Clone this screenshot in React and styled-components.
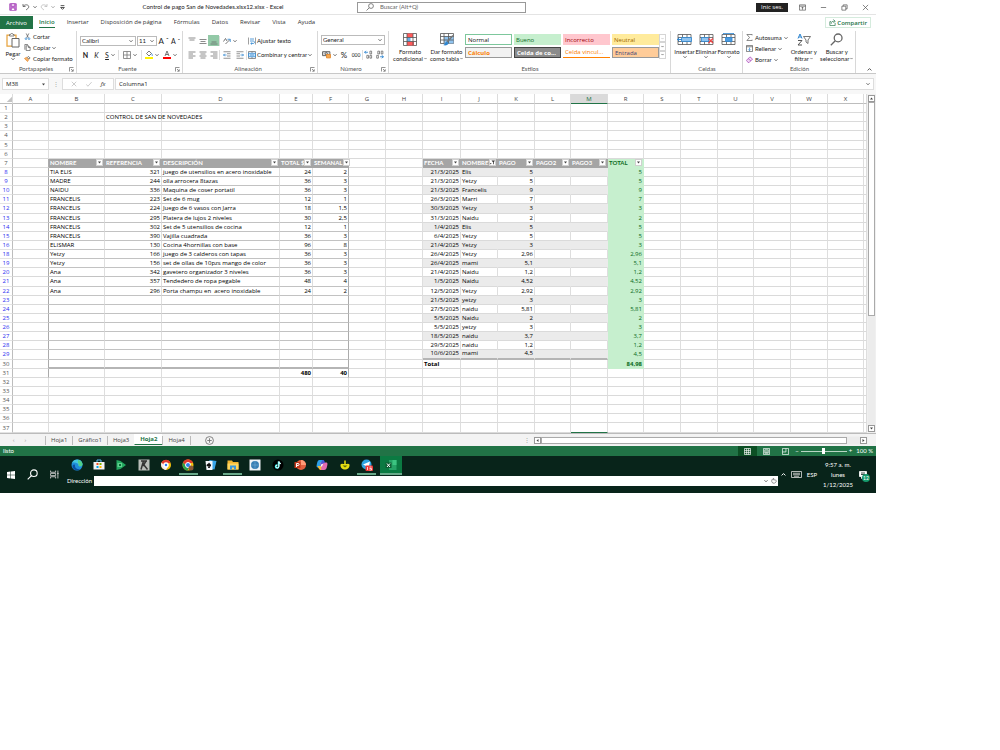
import React from "react";
import styled, { createGlobalStyle, css } from "styled-components";

const GlobalStyle = createGlobalStyle`
  *, *::before, *::after {
    box-sizing: border-box;
  }
  body {
    margin: 0;
    background: #fff;
    font-family: "Open Sans", "Noto Sans", sans-serif;
    font-size: 6px;
    line-height: 8px;
    color: #222;
  }
  button, input, select {
    font: inherit;
    color: inherit;
    margin: 0;
    padding: 0;
    border: 0;
    background: none;
    border-radius: 0;
    outline: 0;
  }
  svg {
    display: block;
    flex: none;
  }
`;

const Page = styled.div`
  padding-right: 124px;
`;

const Row = styled.div`
  display: flex;
  align-items: center;
  gap: ${(p) => p.gap || 0}px;
`;

const Spacer = styled.div`
  flex: 1;
`;

/* ---------- icons ---------- */

const Svg = ({ w = 9, h = w, box = "0 0 16 16", children, ...rest }) => (
  <svg
    width={w}
    height={h}
    viewBox={box}
    fill="none"
    stroke="#555"
    strokeWidth="1.6"
    aria-hidden="true"
    {...rest}
  >
    {children}
  </svg>
);

const Caret = ({ color = "#555", w = 4 }) => (
  <Svg w={w} box="0 0 8 8" stroke={color} strokeWidth="1.8">
    <path d="M1 2.500l3 3 3-3" />
  </Svg>
);

const Arrow = ({ dir, w = 3 }) => (
  <Svg w={w} box="0 0 6 6" stroke="none" fill="#444">
    <path d={{ up: "M0 5h6L3 1z", down: "M0 1h6L3 5z", left: "M5 0v6L1 3z", right: "M1 0v6l4-3z" }[dir]} />
  </Svg>
);

const Launcher = () => (
  <Svg w={5} box="0 0 10 10" stroke="#666" strokeWidth="1.4">
    <path d="M1 9V1h8M4 4l4 4M8.500 4.500v4h-4" />
  </Svg>
);

const SaveIcon = () => (
  <Svg w={8} stroke="#a33fb5">
    <path d="M1.500 1.500h13v13h-13z" fill="#c884d6" />
    <path d="M4.500 1.500h7v5h-7z" fill="#f7e8fa" />
    <path d="M4.500 14v-4h7v4" fill="#fff" />
  </Svg>
);

const UndoIcon = ({ color, flip }) => (
  <Svg w={8} stroke={color} style={flip ? { transform: "scaleX(-1)" } : undefined}>
    <path d="M2 2v5h5M2.500 6.500C6 2 14 3 13.500 8c-.2 2.500-3 4-5.500 6" />
  </Svg>
);

const SearchIcon = ({ w = 8, color = "#666" }) => (
  <Svg w={w} stroke={color}>
    <circle cx="10" cy="6" r="4.800" />
    <path d="M6.500 9.500L1 15" />
  </Svg>
);

const PasteIcon = () => (
  <Svg w={14} h={15} box="0 0 28 30">
    <path d="M2 4h18v22H2z" fill="#fff" stroke="#e8a33d" strokeWidth="2.500" />
    <path d="M7 6V3h2c0-3 5-3 5 0h2v3z" fill="#fff" stroke="#666" />
    <path d="M12 11h14v17H12z" fill="#fff" stroke="#666" strokeWidth="2" />
  </Svg>
);

const CutIcon = () => (
  <Svg w={7}>
    <path d="M5 1l5 10M11 1L6 11" />
    <circle cx="4.500" cy="13" r="2" stroke="#2f86d0" />
    <circle cx="11.500" cy="13" r="2" stroke="#2f86d0" />
  </Svg>
);

const CopyIcon = () => (
  <Svg w={7}>
    <path d="M2 13V1h7M5 4h5l4 4v7H5z" fill="#fff" />
    <path d="M10 4v4h4" />
  </Svg>
);

const BrushIcon = () => (
  <Svg w={7}>
    <path d="M1 8l5-3 5 5-3 5z" fill="#f6b26b" stroke="#e58a2c" />
    <path d="M8 6l2-3 4 4-3 2z" fill="#fff" />
  </Svg>
);

const LinesIcon = ({ lines, w = 8 }) => (
  <Svg w={w} stroke="#666" strokeWidth="1.500">
    {lines.map(([x1, x2, y]) => (
      <path key={y} d={`M${x1} ${y}H${x2}`} />
    ))}
  </Svg>
);

const BorderIcon = () => (
  <Svg w={8} stroke="#777">
    <path d="M1 1h14v14H1zM8 1v14M1 8h14" />
  </Svg>
);

const FillIcon = () => (
  <Svg w={8} h={9} box="0 0 16 18">
    <path d="M3 7l5-5 5 5-5 5z" fill="#fff" />
    <path d="M13 7c2 2 2 4 1 5" stroke="#2f86d0" />
    <path d="M0 16h16" stroke="#fff200" strokeWidth="4" />
  </Svg>
);

const FontColorIcon = () => (
  <Svg w={8} h={9} box="0 0 16 18">
    <path d="M4 12L8 2l4 10M5.500 9h5" />
    <path d="M0 16h16" stroke="#f00" strokeWidth="4" />
  </Svg>
);

const OrientIcon = () => (
  <Svg w={8}>
    <path d="M1 9l4-6 3 5M5 14l9-9" />
    <path d="M9 4.500h5.500V10" stroke="#2f86d0" />
  </Svg>
);

const IndentIcon = ({ flip }) => (
  <Svg w={8} style={flip ? { transform: "scaleX(-1)" } : undefined}>
    <path d="M1 1.500h14M8 5.500h7M8 10h7M1 14.500h14" stroke="#777" />
    <path d="M7 8H1M3.500 5.500L1 8l2.500 2.500" stroke="#2f86d0" />
  </Svg>
);

const WrapIcon = () => (
  <Svg w={8}>
    <path d="M1 1v14M15 1v14" stroke="#888" />
    <path d="M4 4h8M4 8h6c4 0 4 5 0 5H6M8 10.500L5.500 13 8 15" stroke="#2f86d0" />
  </Svg>
);

const MergeIcon = () => (
  <Svg w={8}>
    <path d="M1 1h14v14H1zM8 1v3M8 12v3" stroke="#777" />
    <path d="M1 4.500h14v7H1z" fill="#cfe6f8" stroke="#2f86d0" />
    <path d="M4 8h8" stroke="#2f86d0" />
  </Svg>
);

const MoneyIcon = () => (
  <Svg w={9}>
    <path d="M1 3h13v7H1z" fill="#ddd" />
    <circle cx="7.500" cy="6.500" r="2" />
    <path d="M8 8h7v6H8z" fill="#f7a950" stroke="#e58a2c" />
  </Svg>
);

const DecimalIcon = ({ flip }) => (
  <Svg w={9}>
    <path
      d={flip ? "M9 12h6M12 9.500l3 2.500-3 2.500" : "M7 4H1M3.500 1.500L1 4l2.500 2.500"}
      stroke="#2f86d0"
    />
    <path d={flip ? "M5 2h3v5H5zM11 2h3v5h-3z" : "M10.500 2h3v5h-3z"} strokeWidth="1.200" />
    <path d={flip ? "M3 9.500h3v5H3z" : "M5 9.500h3v5H5zM10.500 9.500h3v5h-3z"} strokeWidth="1.200" />
  </Svg>
);

const ConditionalIcon = () => (
  <Svg w={14} h={13} box="0 0 28 26">
    <path d="M1 1h26v24H1z" fill="#fff" />
    <path d="M8 1h12v8H8zM8 17h14v8H8z" fill="#ff5a5a" stroke="none" />
    <path d="M8 9h7v8H8z" fill="#6aaee8" stroke="none" />
    <path d="M1 9h26M1 17h26M8 1v24M20 1v24" />
  </Svg>
);

const TableFormatIcon = () => (
  <Svg w={14} h={13} box="0 0 28 26">
    <path d="M1 1h26v20H1z" fill="#fff" />
    <path d="M8 7h19v14H8z" fill="#8fc3ef" stroke="none" />
    <path d="M1 7h26M1 14h26M8 1v20M17 1v20" />
    <path d="M26 5L14 18" stroke="#777" strokeWidth="3" />
    <path d="M14 17c-4 0-3 6-8 7 5 2 11 0 11-4z" fill="#2f86d0" stroke="none" />
  </Svg>
);

const CellsIcon = ({ kind }) => (
  <Svg w={15} h={13} box="0 0 30 26">
    <path d="M2 3h26v20H2zM2 9h26M2 17h26M11 3v20M20 3v20" />
    {kind === "insert" && (
      <>
        <path d="M9 9h20v8H9z" fill="#8fc3ef" stroke="#2f86d0" />
        <path d="M10 13H1M5 9l-4 4 4 4" stroke="#2f86d0" strokeWidth="2" />
      </>
    )}
    {kind === "delete" && (
      <>
        <path d="M5 9h14v8H5z" fill="#8fc3ef" stroke="#2f86d0" />
        <path d="M19 11l9 9M28 11l-9 9" stroke="#f04545" strokeWidth="2.400" />
      </>
    )}
    {kind === "format" && (
      <>
        <path d="M9 9h13v8H9z" fill="#4b9be0" stroke="#2f86d0" />
        <path d="M5 1h20M5 0v3M25 0v3" stroke="#2f86d0" />
      </>
    )}
  </Svg>
);

const SigmaIcon = () => (
  <Svg w={7}>
    <path d="M14 3V1H2l6 7-6 7h12v-2" />
  </Svg>
);

const FillDownIcon = () => (
  <Svg w={7}>
    <path d="M1 1h14v14H1zM1 4h14" />
    <path d="M8 6v7M5 10l3 3 3-3" stroke="#2f86d0" />
  </Svg>
);

const EraserIcon = () => (
  <Svg w={7}>
    <path d="M1 10l8-8 6 5-8 8H5z" fill="#f1d8f5" stroke="#a33fb5" />
    <path d="M5 6l6 5" stroke="#a33fb5" />
  </Svg>
);

const SortIcon = () => (
  <Svg w={14} h={13} box="0 0 28 26">
    <path d="M2 11l4-9 4 9M3.500 8h5" stroke="#2f86d0" strokeWidth="2" />
    <path d="M2 15h8l-8 9h8" strokeWidth="2" />
    <path d="M13 7h14l-5 7v7l-4-3v-4z" />
  </Svg>
);

const FilterIcon = () => (
  <Svg w={5} box="0 0 10 10" stroke="none" fill="#333">
    <path d="M3 1h7L7.500 4.500V9L6 8V4.500zM0 6l3 0-1.500 3z" />
  </Svg>
);

/* ---------- title bar ---------- */

const TitleBar = styled.header`
  display: grid;
  grid-template-columns: 357fr 169px 350fr;
  align-items: center;
  height: 15px;
  background: #fff;
  border-bottom: 1px solid #e4e4e4;
`;

const QuickAccess = styled.div`
  display: flex;
  align-items: center;
  padding-left: 7px;
  gap: 3px;
`;

const IconButton = styled.button`
  display: flex;
  align-items: center;
  justify-content: center;
  gap: 3px;
  min-width: ${(p) => p.$w || 0}px;
`;

const DocTitle = styled.h1`
  margin: 0;
  flex: 1;
  text-align: center;
  font-family: Lato, sans-serif;
  font-size: 6px;
  font-weight: 400;
  white-space: nowrap;
`;

const SearchBox = styled.label`
  display: flex;
  align-items: center;
  gap: 6px;
  height: 11px;
  padding-left: 8px;
  border: 1px solid #999;
  font-family: Lato, sans-serif;

  input {
    flex: 1;
    min-width: 0;
  }
  input::placeholder {
    color: #666;
    opacity: 1;
  }
`;

const WindowControls = styled.div`
  display: flex;
  align-items: center;
  justify-content: flex-end;
  gap: 14px;
  padding-right: 7px;
`;

const SignIn = styled.button`
  height: 9px;
  padding: 0 5px;
  margin-right: -3px;
  background: #222;
  color: #fff;
  line-height: 8px;
`;

/* ---------- ribbon ---------- */

const TabBar = styled.nav`
  display: flex;
  align-items: center;
  gap: 12px;
  height: 15px;
  padding-right: 5px;
`;

const FileTab = styled.button`
  height: 13px;
  width: 33px;
  margin-right: -6px;
  background: #217346;
  color: #fff;
`;

const RibbonTab = styled.button`
  height: 11px;
  line-height: 10px;
  color: ${(p) => (p.$active ? "#217346" : "#333")};
  border-bottom: 1px solid ${(p) => (p.$active ? "#217346" : "transparent")};
  font-weight: ${(p) => (p.$active ? 600 : 400)};
`;

const Share = styled.button`
  display: flex;
  align-items: center;
  gap: 1px;
  height: 11px;
  padding: 0 3px;
  border: 1px solid #d5ebdd;
  color: #217346;
  font-weight: 600;
`;

const Ribbon = styled.section`
  display: flex;
  height: 44px;
  padding-top: 1px;
  border-bottom: 1px solid #c8c8c8;
  font-family: Lato, sans-serif;
`;

const GroupBox = styled.div`
  display: flex;
  flex-direction: column;
  flex: 0 0 ${(p) => p.$w}px;
  min-width: 0;
  padding: 0 2px 0 3px;
  border-right: 1px solid #d8d8d8;
`;

const GroupBody = styled.div`
  display: flex;
  gap: ${(p) => p.$gap || 0}px;
  height: 34px;
`;

const GroupLabel = styled.div`
  display: flex;
  align-items: center;
  height: 8px;
  line-height: 8px;
  color: #555;

  span {
    flex: 1;
    text-align: center;
  }
`;

const Group = ({ label, w, gap, launcher, children }) => (
  <GroupBox $w={w}>
    <GroupBody $gap={gap}>{children}</GroupBody>
    <GroupLabel>
      <span>{label}</span>
      {launcher && <Launcher />}
    </GroupLabel>
  </GroupBox>
);

const BigButton = styled.button`
  display: flex;
  flex-direction: column;
  align-items: center;
  flex: none;
  width: ${(p) => p.$w}px;
  padding-top: 2px;
  line-height: 7px;
  white-space: nowrap;

  span {
    display: flex;
    align-items: center;
    gap: 1px;
  }
  span:first-of-type {
    margin-top: 2px;
  }
`;

const Stack = styled.div`
  display: flex;
  flex-direction: column;
  gap: ${(p) => p.$gap || 0}px;
  padding-top: ${(p) => p.$top || 0}px;
`;

const SmallButton = styled.button`
  display: flex;
  align-items: center;
  gap: ${(p) => p.$gap || 2}px;
  height: 11px;
  white-space: nowrap;
`;

const Tool = styled.button`
  display: flex;
  align-items: center;
  justify-content: center;
  gap: 2px;
  width: ${(p) => p.$w || 11}px;
  height: 11px;
  background: ${(p) => (p.$on ? "#93c9a7" : "transparent")};
  font-size: ${(p) => p.$size || 6}px;
  white-space: nowrap;
`;

const Divider = styled.i`
  width: 1px;
  height: 10px;
  background: #ddd;
`;

const Picker = styled.span`
  display: grid;
  align-items: center;
  width: ${(p) => p.$w}px;
  height: 10px;
  border: 1px solid #bbb;

  select, svg {
    grid-area: 1 / 1;
  }
  select {
    appearance: none;
    width: 100%;
    padding-left: 1px;
    line-height: 8px;
  }
  svg {
    justify-self: end;
    margin-right: 2px;
    pointer-events: none;
  }
`;

const SelectBox = ({ label, value, w }) => (
  <Picker $w={w}>
    <select aria-label={label} defaultValue={value}>
      <option>{value}</option>
    </select>
    <Caret />
  </Picker>
);

const Gallery = styled.div`
  display: grid;
  grid-template-columns: repeat(4, 47px);
  grid-template-rows: 11px 11px;
  gap: 2px;
  padding-top: 3px;
  font-family: "Open Sans", sans-serif;
`;

const StyleSwatch = styled.button`
  padding: 0 2px;
  text-align: left;
  line-height: 8px;
  white-space: nowrap;
  ${(p) => p.$look}
`;

const GalleryScroll = styled.div`
  display: flex;
  flex-direction: column;
  width: 7px;
  margin-top: 3px;
  height: 25px;

  button {
    flex: 1;
    display: grid;
    place-items: center;
    border: 1px solid #d5d5d5;
  }
`;

const swatches = [
  ["Normal", css`border: 1px solid #7dc79c; color: #111;`],
  ["Bueno", css`background: #c6efce; color: #0f6b26;`],
  ["Incorrecto", css`background: #ffc7ce; color: #9c0006;`],
  ["Neutral", css`background: #ffeb9c; color: #9c6500;`],
  ["Cálculo", css`background: #f2f2f2; border: 1px solid #999; color: #fa7d00; font-weight: 700;`],
  ["Celda de co...", css`background: #8b8b8b; border: 1px solid #444; color: #fff; font-weight: 700;`],
  ["Celda vincul...", css`color: #fa7d00; border-bottom: 1px solid #ff8001;`],
  ["Entrada", css`background: #ffcc99; border: 1px solid #999; color: #3f3f76;`],
];

const alignRows = {
  top: [[1, 15, 2], [3, 13, 6]],
  middle: [[1, 15, 5], [3, 13, 9], [1, 15, 13]],
  bottom: [[3, 13, 10], [1, 15, 14]],
  left: [[1, 15, 2], [1, 10, 6], [1, 15, 10], [1, 10, 14]],
  center: [[1, 15, 2], [3, 13, 6], [1, 15, 10], [3, 13, 14]],
  right: [[1, 15, 2], [6, 15, 6], [1, 15, 10], [6, 15, 14]],
};

const RibbonPanel = () => (
  <Ribbon>
    <Group label="Portapapeles" w={77} gap={1} launcher>
      <BigButton $w={20}>
        <PasteIcon />
        <span>Pegar</span>
        <Caret />
      </BigButton>
      <Stack>
        <SmallButton><CutIcon />Cortar</SmallButton>
        <SmallButton><CopyIcon />Copiar <Caret /></SmallButton>
        <SmallButton><BrushIcon />Copiar formato</SmallButton>
      </Stack>
    </Group>
    <Group label="Fuente" w={106} launcher>
      <Stack $gap={3} $top={4}>
        <Row gap={1}>
          <SelectBox label="Fuente" value="Calibri" w={56} />
          <SelectBox label="Tamaño" value="11" w={20} />
          <Tool $size={8}>A<sup>ˆ</sup></Tool>
          <Tool $size={7}>A<sup>ˇ</sup></Tool>
        </Row>
        <Row>
          <Tool $size={7}><b>N</b></Tool>
          <Tool $size={7}><i>K</i></Tool>
          <Tool $w={16} $size={7}><u>S</u><Caret /></Tool>
          <Divider />
          <Tool $w={22}><BorderIcon /><Caret /></Tool>
          <Divider />
          <Tool $w={19}><FillIcon /><Caret /></Tool>
          <Tool $w={18}><FontColorIcon /><Caret /></Tool>
        </Row>
      </Stack>
    </Group>
    <Group label="Alineación" w={135} gap={1} launcher>
      <Stack $gap={3} $top={4}>
        <Row>
          <Tool><LinesIcon lines={alignRows.top} /></Tool>
          <Tool><LinesIcon lines={alignRows.middle} /></Tool>
          <Tool $on><LinesIcon lines={alignRows.bottom} /></Tool>
          <Divider />
          <Tool $w={20}><OrientIcon /><Caret /></Tool>
        </Row>
        <Row>
          <Tool><LinesIcon lines={alignRows.left} /></Tool>
          <Tool><LinesIcon lines={alignRows.center} /></Tool>
          <Tool><LinesIcon lines={alignRows.right} /></Tool>
          <Divider />
          <Tool $w={13}><IndentIcon /></Tool>
          <Tool $w={13}><IndentIcon flip /></Tool>
          <Divider />
        </Row>
      </Stack>
      <Stack $gap={3} $top={4}>
        <SmallButton $gap={1}><WrapIcon />Ajustar texto</SmallButton>
        <SmallButton $gap={1}><MergeIcon />Combinar y centrar <Caret /></SmallButton>
      </Stack>
    </Group>
    <Group label="Número" w={71} launcher>
      <Stack $gap={4} $top={4}>
        <SelectBox label="Formato de número" value="General" w={64} />
        <Row>
          <Tool $w={17}><MoneyIcon /><Caret /></Tool>
          <Tool $w={12} $size={8}>%</Tool>
          <Tool $w={12} $size={5}>000</Tool>
          <Divider />
          <Tool><DecimalIcon /></Tool>
          <Tool><DecimalIcon flip /></Tool>
        </Row>
      </Stack>
    </Group>
    <Group label="Estilos" w={282}>
      <BigButton $w={36}>
        <ConditionalIcon />
        <span>Formato</span>
        <span>condicional <Caret w={3} /></span>
      </BigButton>
      <BigButton $w={37}>
        <TableFormatIcon />
        <span>Dar formato</span>
        <span>como tabla <Caret w={3} /></span>
      </BigButton>
      <Gallery>
        {swatches.map(([name, look]) => (
          <StyleSwatch key={name} $look={look}>{name}</StyleSwatch>
        ))}
      </Gallery>
      <GalleryScroll>
        <button aria-label="Subir"><Caret color="#bbb" w={3} /></button>
        <button aria-label="Bajar"><Caret w={3} /></button>
        <button aria-label="Más"><Caret w={3} /></button>
      </GalleryScroll>
    </Group>
    <Group label="Celdas" w={72}>
      <BigButton $w={21}><CellsIcon kind="insert" /><span>Insertar</span><Caret /></BigButton>
      <BigButton $w={22}><CellsIcon kind="delete" /><span>Eliminar</span><Caret /></BigButton>
      <BigButton $w={23}><CellsIcon kind="format" /><span>Formato</span><Caret /></BigButton>
    </Group>
    <Group label="Edición" w={113} gap={1}>
      <Stack $top={1}>
        <SmallButton><SigmaIcon />Autosuma <Caret /></SmallButton>
        <SmallButton><FillDownIcon />Rellenar <Caret /></SmallButton>
        <SmallButton><EraserIcon />Borrar <Caret /></SmallButton>
      </Stack>
      <BigButton $w={30}>
        <SortIcon />
        <span>Ordenar y</span>
        <span>filtrar <Caret w={3} /></span>
      </BigButton>
      <BigButton $w={34}>
        <SearchIcon w={13} />
        <span>Buscar y</span>
        <span>seleccionar <Caret w={3} /></span>
      </BigButton>
    </Group>
    <Spacer />
    <CollapseButton aria-label="Contraer la cinta">
      <Svg w={5} box="0 0 8 8"><path d="M1 5.500l3-3 3 3" /></Svg>
    </CollapseButton>
  </Ribbon>
);

const CollapseButton = styled.button`
  align-self: flex-end;
  padding: 0 4px 1px 0;
`;

/* ---------- formula bar ---------- */

const FormulaBar = styled.div`
  display: flex;
  align-items: center;
  height: 20px;
  padding: 0 1px 0 2px;
  background: #f7f7f7;
`;

const FormulaBox = styled.div`
  display: flex;
  align-items: center;
  justify-content: space-around;
  width: ${(p) => p.$w}px;
  flex: ${(p) => (p.$w ? "none" : 1)};
  height: 12px;
  padding: 0 3px;
  margin-right: 1px;
  background: #fff;
  border: 1px solid #ddd;

  input {
    flex: 1;
    min-width: 0;
  }
`;

const Dots = styled.span`
  width: 12px;
  text-align: center;
  color: #999;
`;

/* ---------- grid ---------- */

const SheetArea = styled.div`
  display: flex;
`;

const Grid = styled.table`
  flex: 1;
  width: 100%;
  height: 339px;
  table-layout: fixed;
  border-collapse: separate;
  border-spacing: 0;
  font-size: 6px;
  line-height: 7px;
  color: #000;
`;

const ColHead = styled.th`
  height: 10px;
  padding: 1px 0 0;
  font-weight: 400;
  color: #444;
  background: ${(p) => (p.$selected ? "#dadada" : "#fff")};
  border-right: 1px solid #dcdcdc;
  border-bottom: 1px solid ${(p) => (p.$selected ? "#217346" : "#bdbdbd")};
  ${(p) => p.$selected && "color: #217346;"}
`;

const RowHead = styled.th`
  padding: 1px 0 0;
  font-weight: 400;
  color: ${(p) => (p.$filtered ? "#2a2af0" : "#555")};
  border-right: 1px solid #bdbdbd;
  border-bottom: 1px solid #e4e4e4;
`;

const Cell = styled.td`
  padding: 1px 1px 0;
  white-space: pre;
  text-align: ${(p) => (p.$right ? "right" : "left")};
  border-right: 1px solid #dedede;
  border-bottom: 1px solid #dadada;
  ${(p) => p.$bold && "font-weight: 700;"}
  ${(p) => p.$framed && "border-bottom-color: #c2c2c2;"}
  ${(p) => p.$edge && "border-right-color: #ababab;"}
  ${(p) => p.$band && "background: #ebebeb; border-right-color: #ebebeb;"}
  ${(p) => p.$green && "background: #c6efce; color: #0b6b22; border-color: #c6efce;"}
  ${(p) => p.$head && "padding-top: 0;"}
  ${(p) => p.$head && !p.$green && "background: #a5a5a5; color: #fff; border-color: #a5a5a5;"}
  ${(p) => p.$double && "padding-top: 0; border-bottom: 2px solid #b5b5b5;"}
  ${(p) => p.$active && "border-bottom: 1px solid #217346;"}
`;

const HeadContent = styled.div`
  display: flex;
  align-items: center;
  justify-content: space-between;
  font-family: Lato, sans-serif;
`;

const FilterButton = styled.button`
  display: grid;
  place-items: center;
  flex: none;
  width: 7px;
  height: 7px;
  background: #fff;
  border: 1px solid #d0d0d0;
`;

const columns = [
  ["A", 36], ["B", 56], ["C", 57], ["D", 118], ["E", 33], ["F", 36], ["G", 37],
  ["H", 37], ["I", 38], ["J", 37], ["K", 37], ["L", 36], ["M", 37], ["R", 36],
  ["S", 37], ["T", 37], ["U", 36], ["V", 37], ["W", 37], ["X", 36],
];

const headings = {
  B: "NOMBRE", C: "REFERENCIA", D: "DESCRIPCIÓN", E: "TOTAL $", F: "SEMANAL",
  I: "FECHA", J: "NOMBRE", K: "PAGO", L: "PAGO2", M: "PAGO3", R: "TOTAL",
};

const products = {
  8: ["TIA ELIS", "321", "juego de utensilios en acero inoxidable", "24", "2"],
  9: ["MADRE", "244", "olla arrocera 8tazas", "36", "3"],
  10: ["NAIDU", "336", "Maquina de coser portatil", "36", "3"],
  11: ["FRANCELIS", "223", "Set de 6 mug", "12", "1"],
  12: ["FRANCELIS", "224", "Juego de 6 vasos con Jarra", "18", "1,5"],
  13: ["FRANCELIS", "295", "Platera de lujos 2 niveles", "30", "2,5"],
  14: ["FRANCELIS", "302", "Set de 5 utensilios de cocina", "12", "1"],
  15: ["FRANCELIS", "390", "Vajilla cuadrada", "36", "3"],
  16: ["ELISMAR", "130", "Cocina 4hornillas con base", "96", "8"],
  18: ["Yetzy", "166", "juego de 3 calderos con tapas", "36", "3"],
  19: ["Yetzy", "156", "set de ollas de 10pzs mango de color", "36", "3"],
  20: ["Ana", "342", "gavetero organizador 3 niveles", "36", "3"],
  21: ["Ana", "357", "Tendedero de ropa pegable", "48", "4"],
  22: ["Ana", "296", "Porta champu en  acero inoxidable", "24", "2"],
  31: ["", "", "", "480", "40"],
};

const payments = {
  8: ["21/3/2025", "Elis", "5"],
  9: ["21/3/2025", "Yetzy", "5"],
  10: ["21/3/2025", "Francelis", "9"],
  11: ["26/3/2025", "Marri", "7"],
  12: ["30/3/2025", "Yetzy", "3"],
  13: ["31/3/2025", "Naidu", "2"],
  14: ["1/4/2025", "Elis", "5"],
  15: ["6/4/2025", "Yetzy", "5"],
  16: ["21/4/2025", "Yetzy", "3"],
  18: ["26/4/2025", "Yetzy", "2,96"],
  19: ["26/4/2025", "mami", "5,1"],
  20: ["21/4/2025", "Naidu", "1,2"],
  21: ["1/5/2025", "Naidu", "4,52"],
  22: ["12/5/2025", "Yetzy", "2,92"],
  23: ["21/5/2025", "yetzy", "3"],
  24: ["27/5/2025", "naidu", "5,81"],
  25: ["5/5/2025", "Naidu", "2"],
  26: ["5/5/2025", "yetzy", "3"],
  27: ["18/5/2025", "naidu", "3,7"],
  28: ["29/5/2025", "naidu", "1,2"],
  29: ["10/6/2025", "mami", "4,5"],
};

const rowNumbers = Array.from({ length: 37 }, (_, i) => i + 1).filter((n) => n !== 17);

const cellText = (col, n) => {
  if (n === 2 && col === "C") return "CONTROL DE SAN DE NOVEDADES";
  if (n === 30 && col === "I") return "Total";
  if (n === 30 && col === "R") return "84,98";
  const product = "BCDEF".indexOf(col);
  if (product >= 0) return products[n]?.[product];
  if (col === "R") return payments[n]?.[2];
  const payment = "IJK".indexOf(col);
  return payment >= 0 ? payments[n]?.[payment] : undefined;
};

const Sheet = () => (
  <Grid>
    <colgroup>
      <col style={{ width: 13 }} />
      {columns.map(([name, w]) => (
        <col key={name} style={{ width: w }} />
      ))}
      <col />
    </colgroup>
    <thead>
      <tr>
        <ColHead aria-label="Seleccionar todo">
          <Svg w={6} box="0 0 8 8" stroke="none" style={{ marginLeft: "auto" }}>
            <path d="M8 1v7H1z" fill="#c4c4c4" />
          </Svg>
        </ColHead>
        {columns.map(([name]) => (
          <ColHead key={name} $selected={name === "M"}>{name}</ColHead>
        ))}
        <ColHead />
      </tr>
    </thead>
    <tbody>
      {rowNumbers.map((n) => (
        <tr key={n}>
          <RowHead $filtered={n > 7 && n < 30}>{n}</RowHead>
          {columns.map(([col]) => {
            const head = n === 7 && headings[col];
            const left = "BCDEF".includes(col);
            const right = "IJKLM".includes(col);
            return (
              <Cell
                key={col}
                $head={!!head}
                $bold={!!head || (n >= 30 && n <= 31)}
                $right={!head && "CEFIKR".includes(col) && n > 7 && !(n === 30 && col === "I")}
                $framed={left && n > 6 && n < 31}
                $edge={(col === "A" || col === "F") && n > 6 && n < 32}
                $band={right && n > 7 && n < 30 && (n < 17 ? n % 2 === 0 : n % 2 === 1)}
                $green={col === "R" && n > 6 && n < 31}
                $double={(left && n === 30) || (right && n === 29)}
                $active={col === "M" && n === 37}
              >
                {head ? (
                  <HeadContent>
                    {head}
                    <FilterButton aria-label={`Filtrar ${head}`}>
                      {col === "J" ? <FilterIcon /> : <Arrow dir="down" />}
                    </FilterButton>
                  </HeadContent>
                ) : (
                  cellText(col, n)
                )}
              </Cell>
            );
          })}
          <Cell />
        </tr>
      ))}
    </tbody>
  </Grid>
);

const ScrollTrack = styled.div`
  display: flex;
  flex-direction: ${(p) => (p.$vertical ? "column" : "row")};
  flex: none;
  width: ${(p) => (p.$vertical ? 9 : 335)}px;
  padding: 1px;
  background: #f0f0f0;
`;

const ScrollButton = styled.button`
  display: grid;
  place-items: center;
  width: 7px;
  height: 7px;
  background: #fff;
  border: 1px solid #999;
`;

const ScrollThumb = styled.div`
  flex: ${(p) => p.$grow};
  background: #fff;
  border: 1px solid #aaa;
`;

const ScrollRest = styled.div`
  flex: ${(p) => p.$grow};
  background: #ececec;
`;

const Corner = styled.div`
  width: 8px;
`;

/* ---------- sheet tabs and status bar ---------- */

const SheetTabs = styled.div`
  display: flex;
  align-items: center;
  height: 13px;
  background: #f3f3f3;
  border-top: 1px solid #bbb;
`;

const TabNav = styled.div`
  display: flex;
  justify-content: center;
  gap: 10px;
  width: 45px;
  padding-right: 6px;
  color: #999;
`;

const SheetTab = styled.button`
  height: 9px;
  padding: 0 5px;
  border-left: 1px solid #bbb;
  line-height: 8px;
  color: #444;
  ${(p) =>
    p.$active &&
    css`
      height: 11px;
      margin-bottom: 1px;
      background: #fff;
      color: #217346;
      font-weight: 700;
      border-left-color: #fff;
      border-bottom: 1px solid #217346;
    `}
`;

const AddSheet = styled.button`
  padding-left: 14px;
  border-left: 1px solid #bbb;
`;

const StatusBar = styled.footer`
  display: flex;
  align-items: center;
  height: 10px;
  padding: 0 3px;
  background: #217346;
  color: #fff;
  font-family: Lato, sans-serif;
`;

const ViewButton = styled.button`
  display: grid;
  place-items: center;
  width: 19px;
  height: 10px;
  background: ${(p) => (p.$on ? "#0c4f24" : "transparent")};
`;

const ZoomSlider = styled.input`
  appearance: none;
  width: 46px;
  height: 8px;
  margin: 0 2px;
  background: linear-gradient(#b9d6c5, #b9d6c5) center / 100% 1px no-repeat;

  &::-webkit-slider-thumb {
    appearance: none;
    width: 3px;
    height: 6px;
    background: #fff;
  }
`;

/* ---------- taskbar ---------- */

const Taskbar = styled.div`
  display: flex;
  height: 37px;
  padding-left: 7px;
  background: #08241a;
  color: #fff;
  font-family: Lato, sans-serif;
`;

const StartButtons = styled.div`
  display: flex;
  align-items: center;
  gap: 12px;
  width: 60px;
`;

const TaskMain = styled.div`
  flex: 1;
  display: flex;
  flex-direction: column;
`;

const Apps = styled.div`
  display: flex;
  justify-content: space-between;
  width: 335px;
  height: 19px;
`;

const AppButton = styled.button`
  display: grid;
  place-items: center;
  width: ${(p) => (p.$tile ? 22 : 19)}px;
  background: ${(p) => (p.$tile ? "#0b7a42" : "transparent")};
  border-bottom: 2px solid ${(p) => (p.$open ? "#6aa98a" : "transparent")};
`;

const AddressRow = styled.label`
  display: flex;
  align-items: center;
  gap: 2px;
  height: 12px;
`;

const AddressBox = styled.span`
  flex: 1;
  display: flex;
  align-items: center;
  gap: 3px;
  height: 10px;
  padding-right: 1px;
  background: #fff;

  input {
    flex: 1;
    color: #222;
  }
`;

const Tray = styled.div`
  display: flex;
  align-items: center;
  gap: 5px;
  padding: 0 9px 0 3px;
`;

const Clock = styled.div`
  width: 32px;
  text-align: center;
  line-height: 10px;
`;

const Notice = styled.button`
  position: relative;
`;

const Badge = styled.span`
  position: absolute;
  left: 3px;
  top: 3px;
  width: 8px;
  height: 8px;
  border-radius: 4px;
  background: #159a6b;
  color: #fff;
  font-size: 5px;
  line-height: 8px;
`;

const AppArt = ({ children }) => (
  <Svg w={12} box="0 0 24 24" stroke="none">{children}</Svg>
);

const apps = [
  ["Edge", <>
    <circle cx="12" cy="12" r="11" fill="#1f8fdb" />
    <path d="M2 8C6-2 22-1 23 10c0 5-7 6-8 3 1-5-8-7-13-5z" fill="#45c8e0" />
    <path d="M14 2c6 1 9 5 9 9 0 4-6 5-8 2 1-2 1-4-1-5z" fill="#4fd08a" />
    <path d="M8 12c-1 6 5 10 11 8-5 5-15 3-16-5 0-3 3-5 5-3z" fill="#0b4fa0" />
  </>],
  ["Store", <>
    <path d="M8 6V2h8v4" fill="none" stroke="#5cc0f5" strokeWidth="2" />
    <path d="M1 6h22v15H1z" fill="#f3f3f3" />
    <path d="M7 8h4v4H7z" fill="#f05022" /><path d="M13 8h4v4h-4z" fill="#7db900" />
    <path d="M7 14h4v4H7z" fill="#00a3ee" /><path d="M13 14h4v4h-4z" fill="#ffb800" />
  </>],
  ["Juegos", <>
    <path d="M3 2l8 2 11 8-11 8-8 2z" fill="#23a860" />
    <path d="M5 8h9v8H5z" fill="#5fd08e" />
    <path d="M8 10h4v4H8z" fill="#0b6b39" />
  </>],
  ["Editor", <>
    <path d="M1 1h22v22H1z" fill="#b9bdb9" />
    <path d="M6 4h12M11 4L6 21M12 12l7 9M16 4l-6 10" stroke="#333" strokeWidth="3" />
  </>],
  ["Chrome 2", <>
    <circle cx="12" cy="12" r="10" fill="#f4c20d" />
    <path d="M3 7C7-1 19 0 21 8l-9 1-4 8z" fill="#e33b2e" />
    <path d="M3 7c-3 7 2 14 9 15l4-7-7-2z" fill="#f2e9ee" />
    <circle cx="12" cy="12" r="4" fill="#2d7ff0" stroke="#fff" strokeWidth="3" />
  </>],
  ["Chrome", <>
    <circle cx="12" cy="12" r="11" fill="#f4c20d" />
    <path d="M2 7C7-2 19-1 22 8H12l-4 6z" fill="#e33b2e" />
    <path d="M2 7c-3 7 2 15 9 16l4-7-7-2z" fill="#2da14e" />
    <circle cx="12" cy="12" r="5" fill="#2d7ff0" stroke="#fff" strokeWidth="2" />
    <circle cx="18" cy="18" r="5" fill="#8a5a3a" />
  </>, true],
  ["Solitario", <>
    <path d="M9 2l14 2-4 17-12-2z" fill="#38a5e8" />
    <path d="M1 4h14v18H3z" fill="#f3f7fa" />
    <path d="M8 7c2 3 5 4 4 7-1 2-3 1-3 0l1 4H6l1-4c-1 1-4 1-4-1 0-3 4-3 5-6z" fill="#111" />
  </>],
  ["Explorador", <>
    <path d="M1 3h9l2 3h11v15H1z" fill="#f2b632" />
    <path d="M1 9h22v12H1z" fill="#ffd75e" />
    <path d="M6 21v-8h12v8h-4v-4h-4v4z" fill="#3a98dc" />
  </>, true],
  ["Web", <>
    <path d="M1 1h22v22H1z" fill="#eef3f7" />
    <circle cx="12" cy="12" r="8" fill="#377fb5" />
    <path d="M4 12h16M12 4v16" stroke="#9ccbe8" strokeOpacity="0.4" fill="none" />
  </>],
  ["TikTok", <>
    <circle cx="12" cy="12" r="11" fill="#000" />
    <path d="M13 5v10a3 3 0 1 1-3-3M13 5c0 3 2 4 4 4" fill="none" stroke="#25f4ee" strokeWidth="3" />
    <path d="M14 5v10a3 3 0 1 1-3-3M14 5c0 3 2 4 4 4" fill="none" stroke="#fff" strokeWidth="2" />
  </>],
  ["PowerPoint", <>
    <circle cx="14" cy="12" r="10" fill="#e2603f" />
    <path d="M14 2a10 10 0 0 1 10 10H14z" fill="#ff9a76" />
    <path d="M1 6h12v12H1z" fill="#c23a1c" />
    <path d="M5 16V9h3c3 0 3 4 0 4H5" fill="none" stroke="#fff" strokeWidth="2" />
  </>],
  ["Copilot", <>
    <path d="M7 2h8l-5 15H4c-4 0-3-4-2-8s2-7 5-7z" fill="#2c9fe8" />
    <path d="M9 7h11c4 0 3 4 2 8s-2 7-6 7H9z" fill="#e56bb0" />
    <path d="M14 2c3 0 3 3 4 6l-5 1-3 8H6c4-1 4-15 8-15z" fill="#4a55d8" />
    <path d="M3 14h8l-1 8c-4 0-5-4-7-8z" fill="#f5b93a" />
    <path d="M11 10h3l-2 5h-3z" fill="#fff" />
  </>],
  ["Limpieza", <>
    <path d="M12 3v8" stroke="#e6df12" strokeWidth="3" />
    <path d="M3 11c2-3 5-1 9-1s7-2 9 1c1 6-4 10-9 10S2 17 3 11z" fill="#e6df12" />
    <path d="M7 13h10l-5 4z" fill="#5b6a0a" />
  </>],
  ["Telegram", <>
    <circle cx="11" cy="11" r="10" fill="#2fa4e2" />
    <path d="M4 11l14-6-3 13-5-4z" fill="#fff" />
    <rect x="9" y="13" width="15" height="11" rx="2" fill="#f03838" />
    <path d="M13 16v6M17 16h4M17 19h4v3h-4" stroke="#fff" strokeWidth="1.500" fill="none" />
  </>, true],
  ["Excel", <>
    <path d="M8 2h15v20H8z" fill="#26a366" />
    <path d="M15 2h8v10h-8z" fill="#3cc481" />
    <path d="M1 7h12v11H1z" fill="#0e5c33" />
    <path d="M4 9l6 7M10 9l-6 7" stroke="#fff" strokeWidth="2" />
  </>, true, true],
];

const App = () => (
  <Page>
    <GlobalStyle />
    <TitleBar>
      <QuickAccess>
        <IconButton aria-label="Guardar" $w={12}><SaveIcon /></IconButton>
        <IconButton aria-label="Deshacer"><UndoIcon color="#555" /><Caret /></IconButton>
        <IconButton aria-label="Rehacer"><UndoIcon color="#bbb" flip /><Caret color="#999" /></IconButton>
        <IconButton aria-label="Personalizar" $w={8}>
          <Svg w={5} box="0 0 8 8"><path d="M1 1h6M1 4l3 3 3-3z" /></Svg>
        </IconButton>
        <DocTitle>Control de pago San de Novedades.xlsx12.xlsx  -  Excel</DocTitle>
      </QuickAccess>
      <SearchBox>
        <SearchIcon />
        <input aria-label="Buscar" placeholder="Buscar (Alt+Q)" />
      </SearchBox>
      <WindowControls>
        <SignIn>Inic ses.</SignIn>
        <IconButton aria-label="Opciones de cinta">
          <Svg w={7}><path d="M1 2h14v12H1zM1 5h14M8 13V7M5.500 9.500L8 7l2.500 2.500" /></Svg>
        </IconButton>
        <IconButton aria-label="Minimizar"><Svg w={7}><path d="M2 8h12" /></Svg></IconButton>
        <IconButton aria-label="Restaurar">
          <Svg w={7}><path d="M2 5h9v9H2zM5 5V2h9v9h-3" /></Svg>
        </IconButton>
        <IconButton aria-label="Cerrar"><Svg w={7}><path d="M2 2l12 12M14 2L2 14" /></Svg></IconButton>
      </WindowControls>
    </TitleBar>

    <TabBar>
      <FileTab>Archivo</FileTab>
      {["Inicio", "Insertar", "Disposición de página", "Fórmulas", "Datos", "Revisar", "Vista", "Ayuda"].map((tab) => (
        <RibbonTab key={tab} $active={tab === "Inicio"}>{tab}</RibbonTab>
      ))}
      <Spacer />
      <Share>
        <Svg w={7} stroke="#217346"><path d="M5 6H2v9h12V9M5 11c0-5 3-6 8-6M10 1l4 4-4 4" /></Svg>
        Compartir
      </Share>
    </TabBar>

    <RibbonPanel />

    <FormulaBar>
      <FormulaBox $w={47}>
        <input aria-label="Cuadro de nombres" defaultValue="M38" />
        <Arrow dir="down" />
      </FormulaBox>
      <Dots>⋮</Dots>
      <FormulaBox $w={52}>
        <Svg w={6} stroke="#aaa"><path d="M2 2l12 12M14 2L2 14" /></Svg>
        <Svg w={6} stroke="#aaa"><path d="M1 9l4 5L15 3" /></Svg>
        <i>fx</i>
      </FormulaBox>
      <FormulaBox>
        <input aria-label="Barra de fórmulas" defaultValue="Columna1" />
        <Caret />
      </FormulaBox>
    </FormulaBar>

    <SheetArea>
      <Sheet />
      <ScrollTrack $vertical>
        <ScrollButton aria-label="Subir"><Arrow dir="up" /></ScrollButton>
        <ScrollThumb $grow={66} />
        <ScrollRest $grow={34} />
        <ScrollButton aria-label="Bajar"><Arrow dir="down" /></ScrollButton>
      </ScrollTrack>
    </SheetArea>

    <SheetTabs>
      <TabNav><span>‹</span><span>›</span></TabNav>
      {["Hoja1", "Gráfico1", "Hoja3", "Hoja2", "Hoja4"].map((tab) => (
        <SheetTab key={tab} $active={tab === "Hoja2"}>{tab}</SheetTab>
      ))}
      <AddSheet aria-label="Hoja nueva">
        <Svg w={9} stroke="#777"><circle cx="8" cy="8" r="7" /><path d="M8 4v8M4 8h8" /></Svg>
      </AddSheet>
      <Spacer />
      <Dots>⋮</Dots>
      <ScrollTrack>
        <ScrollButton aria-label="Izquierda"><Arrow dir="left" /></ScrollButton>
        <ScrollThumb $grow={96} />
        <ScrollRest $grow={4} />
        <ScrollButton aria-label="Derecha"><Arrow dir="right" /></ScrollButton>
      </ScrollTrack>
      <Corner />
    </SheetTabs>

    <StatusBar>
      listo
      <Spacer />
      <ViewButton $on aria-label="Normal">
        <Svg w={7} stroke="#fff"><path d="M1 1h14v14H1zM6 1v14M10.500 1v14M1 6h14M1 10.500h14" /></Svg>
      </ViewButton>
      <ViewButton aria-label="Diseño de página">
        <Svg w={7} stroke="#fff"><path d="M1 1h14v14H1zM4 4h8v8H4zM5 7h6M5 10h6" /></Svg>
      </ViewButton>
      <ViewButton aria-label="Salto de página">
        <Svg w={7} stroke="#fff"><path d="M1 1h14v14H1zM9 1v8H1" /></Svg>
      </ViewButton>
      <button aria-label="Alejar">−</button>
      <ZoomSlider type="range" aria-label="Zoom" defaultValue="50" />
      <Row gap={4}>
        <button aria-label="Acercar">+</button>
        <span>100 %</span>
      </Row>
    </StatusBar>

    <Taskbar>
      <StartButtons>
        <IconButton aria-label="Inicio">
          <Svg w={8} stroke="none" fill="#fff"><path d="M0 2l7-1v6.500H0zM8 1l8-1v7.500H8zM0 8.500h7V15l-7-1zM8 8.500h8V16l-8-1z" /></Svg>
        </IconButton>
        <IconButton aria-label="Buscar"><SearchIcon w={11} color="#fff" /></IconButton>
        <IconButton aria-label="Vista de tareas">
          <Svg w={9} stroke="#ccc"><path d="M1 1v3h9V1M1 15v-3h9v3M1 6h9v4H1zM14 1v14M12.500 6h3" /></Svg>
        </IconButton>
      </StartButtons>
      <TaskMain>
        <Apps>
          {apps.map(([name, art, open, tile]) => (
            <AppButton key={name} aria-label={name} $open={open} $tile={tile}>
              <AppArt>{art}</AppArt>
            </AppButton>
          ))}
        </Apps>
        <AddressRow>
          Dirección
          <AddressBox>
            <input />
            <Caret />
            <Svg w={6}><path d="M13 5a6 6 0 1 1-6-3M7 0v5h5" /></Svg>
          </AddressBox>
        </AddressRow>
      </TaskMain>
      <Tray>
        <Svg w={5} box="0 0 8 8" stroke="#fff"><path d="M1 5.500l3-3 3 3" /></Svg>
        <Svg w={11} h={7} box="0 0 22 14" stroke="#ddd">
          <path d="M1 1h20v12H1zM4 4.500h14M4 7.500h14M6 10.500h10" />
        </Svg>
        <span>ESP</span>
        <Clock>
          9:57 a. m.
          <br />
          lunes
          <br />
          1/12/2025
        </Clock>
        <Notice aria-label="Notificaciones">
          <Svg w={8} stroke="#fff"><path d="M1 1h14v10H8l-3 4v-4H1z" fill="#fff" /><path d="M4 4h8M4 7h8" stroke="#08241a" /></Svg>
          <Badge>12</Badge>
        </Notice>
      </Tray>
    </Taskbar>
  </Page>
);

export default App;
